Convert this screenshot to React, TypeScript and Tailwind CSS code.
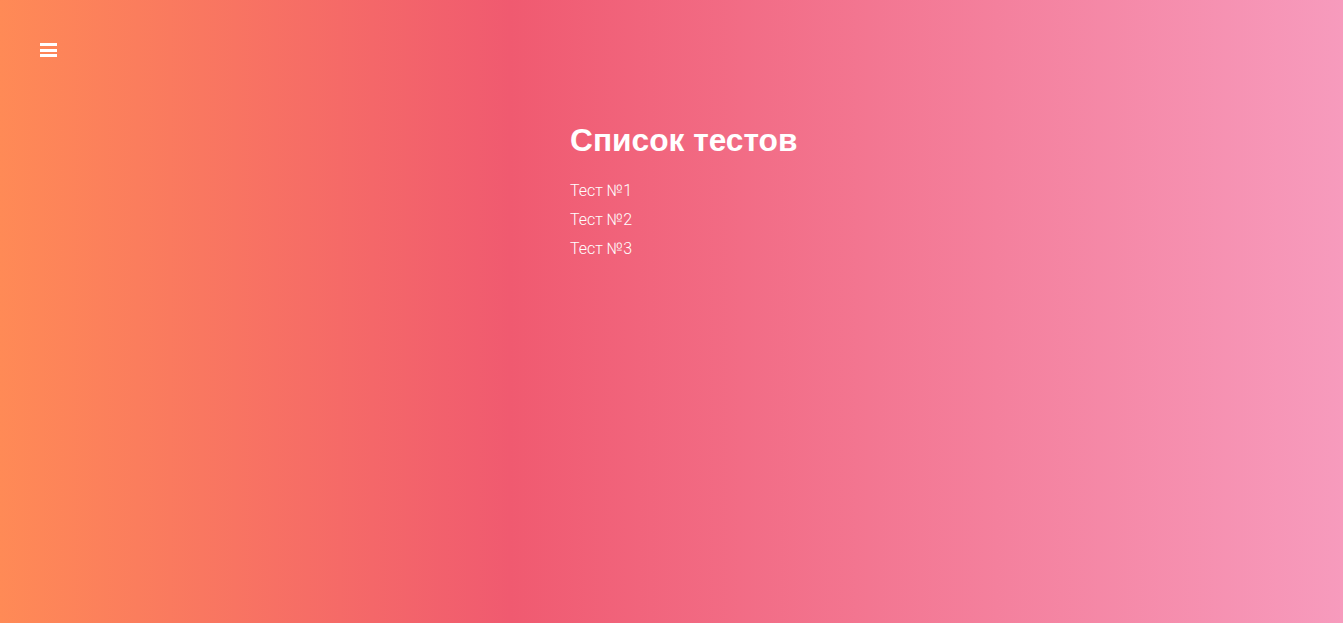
export default function App() {
  const tests = ['Тест №1', 'Тест №2', 'Тест №3'];

  return (
    <div className="min-h-screen w-full bg-[linear-gradient(to_right,#ff8a56_0%,#f05a70_38%,#f79bbd_100%)] text-white">
      <header className="h-[100px] px-10 pt-[43px]">
        <button className="flex flex-col gap-[2.5px]" aria-label="menu">
          <span className="block h-[3px] w-[17px] bg-white" />
          <span className="block h-[3px] w-[17px] bg-white" />
          <span className="block h-[3px] w-[17px] bg-white" />
        </button>
      </header>

      <main className="ml-[570px] pt-[20px]">
        <h1 className="font-['Liberation_Sans',Arial,sans-serif] text-[31.7px] font-bold leading-[40px]">
          Список тестов
        </h1>
        <ul className="mt-[16px] flex flex-col font-['Roboto',sans-serif] text-[16px] font-light">
          {tests.map((t) => (
            <li key={t} className="leading-[29px]">
              {t}
            </li>
          ))}
        </ul>
      </main>
    </div>
  );
}
